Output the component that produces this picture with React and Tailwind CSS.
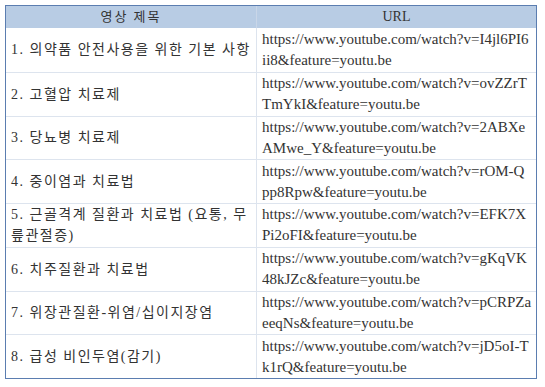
export default function App() {
  const rows = [
    [["1. 의약품 안전사용을 위한 기본 사항"], ["https://www.youtube.com/watch?v=I4jl6PI6", "ii8&feature=youtu.be"]],
    [["2. 고혈압 치료제"], ["https://www.youtube.com/watch?v=ovZZrT", "TmYkI&feature=youtu.be"]],
    [["3. 당뇨병 치료제"], ["https://www.youtube.com/watch?v=2ABXe", "AMwe_Y&feature=youtu.be"]],
    [["4. 중이염과 치료법"], ["https://www.youtube.com/watch?v=rOM-Q", "pp8Rpw&feature=youtu.be"]],
    [["5. 근골격계 질환과 치료법 (요통, 무", "릎관절증)"], ["https://www.youtube.com/watch?v=EFK7X", "Pi2oFI&feature=youtu.be"]],
    [["6. 치주질환과 치료법"], ["https://www.youtube.com/watch?v=gKqVK", "48kJZc&feature=youtu.be"]],
    [["7. 위장관질환-위염/십이지장염"], ["https://www.youtube.com/watch?v=pCRPZa", "eeqNs&feature=youtu.be"]],
    [["8. 급성 비인두염(감기)"], ["https://www.youtube.com/watch?v=jD5oI-T", "k1rQ&feature=youtu.be"]],
  ];
  return (
    <div className="w-[545px] h-[387px] bg-white pt-[5px] pl-[5px]" style={{ fontFamily: '"Liberation Serif", "Noto Sans CJK KR", serif' }}>
      <div className="w-[532px] border border-[#5b7db0] text-[#333] overflow-hidden">
        <div className="grid grid-cols-[251px_1fr] h-[22px] bg-[#b8cce4] text-[13px] leading-[22px]">
          <div className="text-center border-r border-[#c9d6e8] tracking-[2px]">영상 제목</div>
          <div className="text-center text-[14px]">URL</div>
        </div>
        {rows.map((r, i) => (
          <div key={i} className={`grid grid-cols-[251px_1fr] h-[43.75px] ${i > 0 ? "border-t border-[#dde4ee]" : ""}`}>
            <div className="flex flex-col justify-center pl-[5px] border-r border-[#dde4ee] leading-[21px] whitespace-nowrap text-[14px] tracking-[1.5px]">
              {r[0].map((t, j) => <div key={j}>{t}</div>)}
            </div>
            <div className="flex flex-col justify-center pl-[5px] leading-[21px] whitespace-nowrap text-[15px] tracking-[0px]">
              {r[1].map((t, j) => <div key={j}>{t}</div>)}
            </div>
          </div>
        ))}
      </div>
    </div>
  );
}
